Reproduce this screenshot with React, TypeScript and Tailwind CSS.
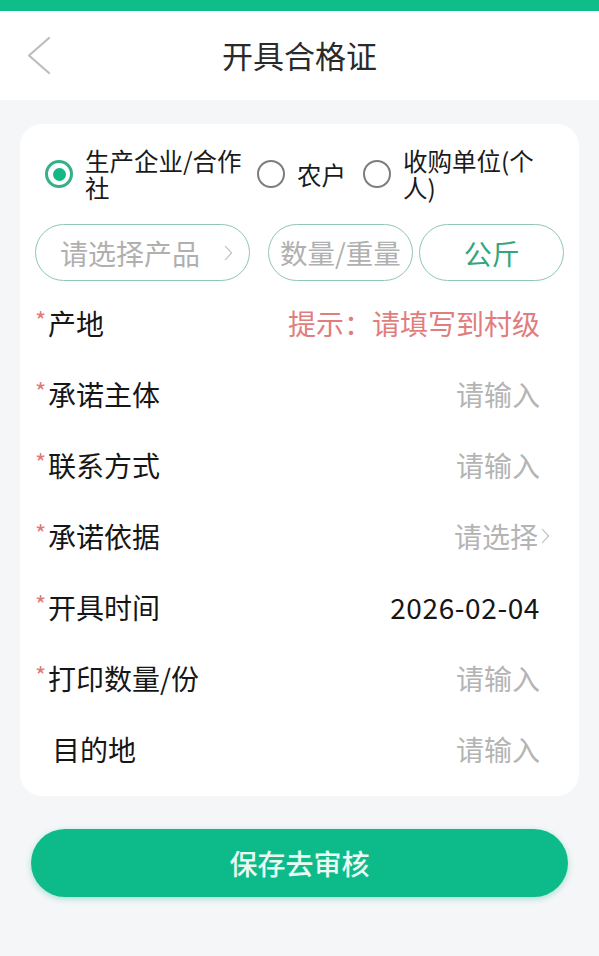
import { useState } from "react";

const font = { fontFamily: '"Noto Sans CJK SC", "Noto Sans", sans-serif' };

const Chevron = ({ className }: { className?: string }) => (
  <svg viewBox="0 0 10 18" fill="none" className={className}>
    <path d="M1.5 1.5L8.5 9L1.5 16.5" stroke="currentColor" strokeWidth="1.4" strokeLinecap="round" strokeLinejoin="round" />
  </svg>
);

const Radio = ({ checked }: { checked: boolean }) =>
  checked ? (
    <span className="flex h-[28px] w-[28px] shrink-0 items-center justify-center rounded-full border-[3.5px] border-[#34b187]">
      <span className="h-[13px] w-[13px] rounded-full bg-[#13b884]" />
    </span>
  ) : (
    <span className="h-[28px] w-[28px] shrink-0 rounded-full border-[2.5px] border-[#7d7d7d]" />
  );

interface RowProps {
  label: string;
  required?: boolean;
  value: string;
  kind?: "placeholder" | "hint" | "value" | "select";
}

const Row = ({ label, required = true, value, kind = "placeholder" }: RowProps) => (
  <div className="flex h-[71px] items-center justify-between pr-[24px]">
    <div className="flex items-center">
      {required ? (
        <span className="-mt-[6px] w-[13px] text-[24px] leading-none text-[#e07a7a]">*</span>
      ) : (
        <span className="w-[17px]" />
      )}
      <span className="text-[28px] leading-none text-[#161616]">{label}</span>
    </div>
    {kind === "hint" && <span className="text-[28px] text-[#e27d7d]">提示：请填写到村级</span>}
    {kind === "placeholder" && <span className="text-[28px] text-[#b4b4b4]">{value}</span>}
    {kind === "value" && <span className="text-[28px] tracking-[0.6px] text-[#161616]">{value}</span>}
    {kind === "select" && (
      <span className="-mr-[10px] flex items-center gap-[3px] text-[28px] text-[#b4b4b4]">
        {value}
        <Chevron className="h-[16px] w-[9px] text-[#c4c4c4]" />
      </span>
    )}
  </div>
);

export default function App() {
  const [type, setType] = useState(0);

  const types = [
    { label: "生产企业/合作社", w: "w-[158px]", mr: "mr-[14px]" },
    { label: "农户", w: "", mr: "mr-[17px]" },
    { label: "收购单位(个人)", w: "w-[142px]", mr: "" },
  ];

  return (
    <div style={font} className="min-h-[956px] bg-[#f5f6f8]">
      <div className="h-[11px] bg-[#0fbd8b]" />
      <header className="relative flex h-[89px] items-center justify-center bg-white">
        <button className="absolute left-[26px] top-[25px] text-[#bdbdbd]">
          <svg width="26" height="40" viewBox="0 0 26 40" fill="none">
            <path d="M23 2L3 19.5L23 37" stroke="currentColor" strokeWidth="2.2" strokeLinecap="round" strokeLinejoin="round" />
          </svg>
        </button>
        <h1 className="text-[31px] font-normal text-[#2a2a2a]">开具合格证</h1>
      </header>

      <div className="mx-[20px] mt-[24px] rounded-[22px] bg-white px-[15px] pb-[12px] pt-[23px]">
        <div className="flex h-[54px] items-center pl-[10px]">
          {types.map((t, i) => (
            <button key={t.label} onClick={() => setType(i)} className={`flex items-center gap-[12px] text-left ${t.mr}`}>
              <Radio checked={type === i} />
              <span className={`text-[24.5px] leading-[27px] text-[#1a1a1a] ${t.w}`}>{t.label}</span>
            </button>
          ))}
        </div>

        <div className="mt-[23px] flex h-[57px] items-center">
          <div className="flex h-full w-[215px] items-center justify-between rounded-full border-[1.5px] border-[#90c7b0] pl-[24px] pr-[16px]">
            <span className="text-[28px] text-[#b0b0b0]">请选择产品</span>
            <Chevron className="h-[16px] w-[9px] text-[#c4c4c4]" />
          </div>
          <div className="ml-[18px] flex h-full w-[146px] items-center justify-center rounded-full border-[1.5px] border-[#90c7b0]">
            <span className="whitespace-nowrap text-[27.5px] text-[#b0b0b0]">数量/重量</span>
          </div>
          <div className="ml-[6px] flex h-full w-[145px] items-center justify-center rounded-full border-[1.5px] border-[#90c7b0]">
            <span className="text-[28px] text-[#35a57c]">公斤</span>
          </div>
        </div>

        <div className="mt-[6px]">
          <Row label="产地" value="" kind="hint" />
          <Row label="承诺主体" value="请输入" />
          <Row label="联系方式" value="请输入" />
          <Row label="承诺依据" value="请选择" kind="select" />
          <Row label="开具时间" value="2026-02-04" kind="value" />
          <Row label="打印数量/份" value="请输入" />
          <Row label="目的地" value="请输入" required={false} />
        </div>
      </div>

      <div className="mx-[31px] mt-[33px]">
        <button className="flex h-[68px] w-full items-center justify-center rounded-full bg-[#0dbb8a] text-[28px] font-medium text-[#eafaf3] shadow-[0_2px_6px_rgba(13,187,138,0.35)]">
          保存去审核
        </button>
      </div>
    </div>
  );
}
